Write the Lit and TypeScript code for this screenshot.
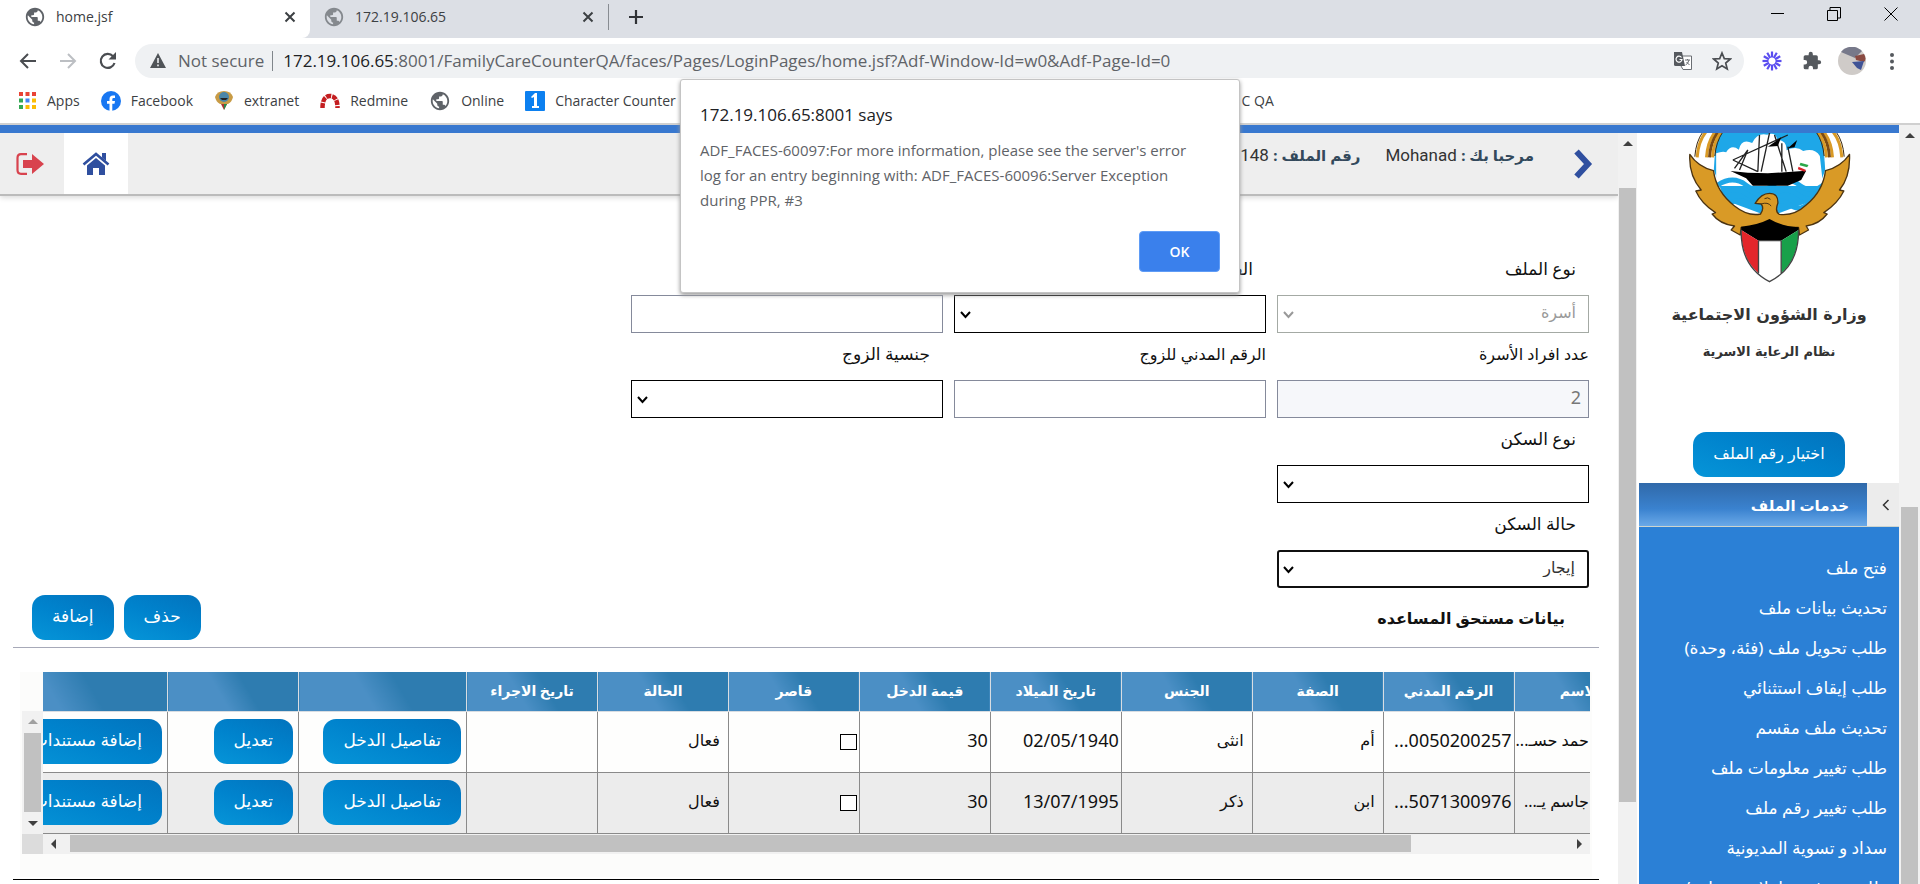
import { LitElement, html, css, svg } from "lit";
import { customElement } from "lit/decorators.js";
import { classMap } from "lit/directives/class-map.js";

const GLOBE =
  "M12 2C6.48 2 2 6.48 2 12s4.48 10 10 10 10-4.48 10-10S17.52 2 12 2zm-1 17.93c-3.95-.49-7-3.85-7-7.93 0-.62.08-1.21.21-1.79L9 15v1c0 1.1.9 2 2 2v1.93zm6.9-2.54c-.26-.81-1-1.39-1.9-1.39h-1v-3c0-.55-.45-1-1-1H8v-2h2c.55 0 1-.45 1-1V7h2c1.1 0 2-.9 2-2v-.41c2.93 1.19 5 4.06 5 7.41 0 2.08-.8 3.97-2.1 5.39z";

const globe = (color: string) =>
  html`<svg width="22" height="22" viewBox="0 0 24 24" aria-hidden="true"><path fill=${color} d=${GLOBE} /></svg>`;

const closeIcon = html`<svg width="12" height="12" viewBox="0 0 12 12" aria-hidden="true">
  <path d="M1.5 1.5 10.5 10.5M10.5 1.5 1.5 10.5" stroke="#3c4043" stroke-width="2" />
</svg>`;

type Dir = "up" | "down" | "left" | "right";
const ARROWS: Record<Dir, string> = {
  up: "M0 7 5 2 10 7Z",
  down: "M0 3 5 8 10 3Z",
  left: "M7 0 2 5 7 10Z",
  right: "M3 0 8 5 3 10Z",
};
const arrow = (dir: Dir, color = "#404040") =>
  html`<svg class="arrow" width="10" height="10" viewBox="0 0 10 10" aria-hidden="true"><path fill=${color} d=${ARROWS[dir]} /></svg>`;

const emblem = html`<svg class="emblem" width="167" height="150" viewBox="255 39 500 450" aria-hidden="true">
  <path fill="#1ea7e8" d="M345 39H665L672 150 640 240 505 290 370 240 338 150Z" />
  <path fill="#fff" d="M345 100q20-8 30-3 15-25 38-8 8-35 40-20 15-32 45-25 25-10 30 15 30 2 28 32 30-15 50 2 35-10 50 15l10 90H345Z" />
  <path fill="none" stroke="#1ea7e8" stroke-width="14" d="M350 195q45-30 85 0t80 0 80 0 75-4M362 222q40-26 78 2t75 0 75 0 65-6M385 250q30-20 60 4t60 0 60 0 60-8" />
  <path fill="#000" d="M388 153 440 158 500 160 615 152 600 180 560 197H455L435 175Z" />
  <path fill="none" stroke="#222" stroke-width="4" d="M395 120 560 45M395 120 470 155M475 45 470 155M505 39 480 155M520 45 555 155M542 70V155M560 80 575 155M415 150 440 90 400 145" />
  <path fill="#000" d="M500 80 540 52 530 78ZM560 85 588 60 580 82Z" />
  <path fill="#2ba84a" d="M598 128 622 135 618 142 595 136Z" />
  <path fill="#d8222a" d="M592 140 615 150 610 155 590 148Z" />
  ${[
    ["#d99a26", 288, 722],
    ["#fff", 302, 708],
    ["#d99a26", 316, 694],
    ["#7a4a14", 325, 685],
    ["#d99a26", 334, 676],
  ].map(
    ([c, l, r]) => svg`<path fill="none" stroke=${c} stroke-width="9" d="M${l} 112Q${Number(l) + 3} 65 ${Number(l) + 26} 36M${r} 112Q${Number(r) - 3} 65 ${Number(r) - 26} 36"/>`,
  )}
  <path fill="none" stroke="#3d2a10" stroke-width="3" d="M281 110Q284 65 305 36M729 110Q726 65 705 36M341 108Q345 65 365 36M669 108Q665 65 645 36" />
  <path
    fill="#d99a26"
    stroke="#4a3312"
    stroke-width="4"
    stroke-linejoin="round"
    d="M266 103Q290 140 337 152Q345 215 400 258Q440 290 478 282Q490 265 480 252L462 250Q480 220 505 220Q532 220 530 250Q520 275 535 283Q580 288 615 255Q665 215 673 152Q720 140 745 103Q748 170 715 210L728 213Q710 250 668 278L678 282Q655 312 615 318L622 330 595 345 592 322H420L417 345 390 330 400 318Q355 312 333 282L343 278Q300 250 284 213L300 210Q262 165 266 103Z"
  />
  <path fill="none" stroke="#4a3312" stroke-width="3" d="M480 252Q500 245 510 258M490 236Q500 230 508 238" />
  <path fill="#000" d="M420 330 420 320 Q470 315 505 297Q545 320 592 322V330L540 362H472Z" />
  <path fill="#e3262b" d="M420 330 472 362V460Q420 415 420 330Z" />
  <path fill="#18a04a" d="M592 330 540 362V460Q592 415 592 330Z" />
  <path fill="#fff" d="M472 362H540V460L505 485 472 460Z" />
  <path fill="none" stroke="#444" stroke-width="4" d="M420 330Q418 440 505 485Q594 440 592 330M472 362V460M540 362V460M472 362H540" />
</svg>`;

interface Field {
  id: string;
  label: string;
  kind: "select" | "input" | "blank";
  value?: string;
  disabled?: boolean;
  focused?: boolean;
  flush?: boolean;
}

const FIELDS: Field[] = [
  { id: "file-type", label: "نوع الملف", kind: "select", value: "أسرة", disabled: true },
  { id: "category", label: "الفئة", kind: "select" },
  { id: "unit", label: "الوحدة", kind: "input" },
  { id: "members", label: "عدد افراد الأسرة", kind: "input", value: "2", disabled: true, flush: true },
  { id: "husband-id", label: "الرقم المدني للزوج", kind: "input", flush: true },
  { id: "nationality", label: "جنسية الزوج", kind: "select" },
  { id: "housing-type", label: "نوع السكن", kind: "select" },
  { id: "b1", label: "", kind: "blank" },
  { id: "b2", label: "", kind: "blank" },
  { id: "housing-state", label: "حالة السكن", kind: "select", value: "إيجار", focused: true },
];

const HEADERS = ["الاسم", "الرقم المدني", "الصفة", "الجنس", "تاريخ الميلاد", "قيمة الدخل", "قاصر", "الحالة", "تاريخ الاجراء", "", "", ""];

const ROWS = [
  { name: "حمد حسـ...", civil: "0050200257...", role: "أم", sex: "انثى", born: "02/05/1940", income: "30", state: "فعال" },
  { name: "جاسم يـ...", civil: "5071300976...", role: "ابن", sex: "ذكر", born: "13/07/1995", income: "30", state: "فعال" },
];

const MENU = [
  "فتح ملف",
  "تحديث بيانات ملف",
  "طلب تحويل ملف (فئة، وحدة)",
  "طلب إيقاف استثنائي",
  "تحديث ملف مقسم",
  "طلب تغيير معلومات ملف",
  "طلب تغيير رقم ملف",
  "سداد و تسوية المديونية",
  "طلب صرف معاملات مختلفة/معونة",
];

@customElement("browser-chrome")
export class BrowserChrome extends LitElement {
  static styles = css`
    :host {
      display: block;
      flex: none;
      font: 15px/20px "Open Sans", "Noto Sans", sans-serif;
      color: #3c4043;
      background: #fff;
      border-bottom: 2px solid #d0d0d0;
    }
    svg {
      display: block;
      flex: none;
    }
    button {
      display: grid;
      place-items: center;
      border: 0;
      padding: 0;
      background: none;
      font: inherit;
      color: inherit;
    }
    .tabs {
      display: flex;
      align-items: center;
      height: 38px;
      background: #dcdfe5;
    }
    .tab {
      display: flex;
      align-items: center;
      gap: 10px;
      width: 310px;
      height: 38px;
      padding: 0 14px 4px 24px;
      box-sizing: border-box;
      font-size: 14px;
    }
    .tab.active {
      background: #fff;
      border-radius: 0 0 8px 0;
    }
    .tab.idle {
      width: 298px;
      padding-left: 13px;
    }
    .tab span {
      flex: 1;
    }
    .plus {
      height: 26px;
      padding: 0 0 0 19px;
      border-left: 1px solid #888c92;
      margin-bottom: 4px;
    }
    .window {
      display: flex;
      gap: 43px;
      margin-left: auto;
      padding: 0 22px 10px 0;
    }
    .bar {
      display: flex;
      align-items: center;
      height: 45px;
      padding: 0 18px;
    }
    .nav {
      display: flex;
      gap: 20px;
    }
    .pill {
      display: flex;
      flex: 1;
      align-items: center;
      height: 34px;
      margin: 0 18px 0 17px;
      padding: 0 12px 0 15px;
      border-radius: 17px;
      background: #eff1f3;
      font-size: 17px;
      color: #5f6368;
      white-space: nowrap;
    }
    .secure {
      margin-left: 12px;
      padding-right: 8px;
      border-right: 1px solid #80868b;
    }
    .pill a {
      flex: 1;
      margin-left: 10px;
      color: #5f6368;
      text-decoration: none;
    }
    .pill b {
      font-weight: 400;
      color: #202124;
    }
    .actions {
      display: flex;
      gap: 20px;
      align-items: center;
    }
    .avatar {
      margin: 0 -4px;
    }
    .marks {
      display: flex;
      align-items: center;
      gap: 21px;
      height: 40px;
      box-sizing: border-box;
      padding: 0 19px 4px;
      font-size: 14px;
    }
    .marks a {
      display: flex;
      align-items: center;
      gap: 10px;
      color: inherit;
      text-decoration: none;
      white-space: nowrap;
    }
    .marks .last {
      justify-content: flex-end;
      width: 577px;
    }
  `;

  render() {
    const dots = ["#e94335", "#e94335", "#e94335", "#34a853", "#4285f4", "#fbbc05", "#34a853", "#fbbc05", "#fbbc05"];
    return html`
      <div class="tabs">
        <div class="tab active">${globe("#5f6368")}<span>home.jsf</span><button aria-label="Close tab">${closeIcon}</button></div>
        <div class="tab idle">${globe("#85898e")}<span>172.19.106.65</span><button aria-label="Close tab">${closeIcon}</button></div>
        <button class="plus" aria-label="New tab">
          <svg width="16" height="16" viewBox="0 0 16 16"><path d="M8 1V15M1 8H15" stroke="#303236" stroke-width="2.2" /></svg>
        </button>
        <div class="window">
          <button aria-label="Minimize"><svg width="13" height="14" viewBox="0 0 13 14"><path d="M0 6.5H13" stroke="#000" /></svg></button>
          <button aria-label="Restore">
            <svg width="14" height="14" viewBox="0 0 14 14"><path d="M.5 3.5H10.5V13.5H.5ZM3 3V.5H13.5V11H11" fill="none" stroke="#000" /></svg>
          </button>
          <button aria-label="Close"><svg width="14" height="14" viewBox="0 0 14 14"><path d="M.5.5 13.5 13.5M13.5.5.5 13.5" stroke="#000" /></svg></button>
        </div>
      </div>
      <div class="bar">
        <div class="nav">
          <button aria-label="Back"><svg width="20" height="20" viewBox="0 0 20 20"><path d="M18 10H3M10 3 3 10 10 17" fill="none" stroke="#4a4d51" stroke-width="2" /></svg></button>
          <button aria-label="Forward"><svg width="20" height="20" viewBox="0 0 20 20"><path d="M2 10H17M10 3 17 10 10 17" fill="none" stroke="#bcbfc3" stroke-width="2" /></svg></button>
          <button aria-label="Reload">
            <svg width="20" height="20" viewBox="0 0 20 20"><path d="M16.5 12A7 7 0 1 1 15 5.200" fill="none" stroke="#4a4d51" stroke-width="2.200" /><path d="M18 1V8.500H10.500Z" fill="#4a4d51" /></svg>
          </button>
        </div>
        <div class="pill">
          <svg width="16" height="15" viewBox="0 0 16 15"><path d="M8 0 16 15H0Z" fill="#505458" /><path d="M8 5V10M8 11.500V13.300" stroke="#eff1f3" stroke-width="1.600" /></svg>
          <span class="secure">Not secure</span>
          <a href="#"><b>172.19.106.65</b>:8001/FamilyCareCounterQA/faces/Pages/LoginPages/home.jsf?Adf-Window-Id=w0&amp;Adf-Page-Id=0</a>
          <div class="actions">
            <svg width="18" height="18" viewBox="0 0 18 18">
              <path d="M7 4H17.500V17.500H9L7 14" fill="#fff" stroke="#6a6e73" /><path d="M0 0H8L11 14H1.500Q0 14 0 12.500Z" fill="#55595e" />
              <path d="M7.500 5.500A3 3 0 1 0 8 7.500H5.500" fill="none" stroke="#fff" stroke-width="1.200" /><path d="M11 8H16M13.500 7V8M15 8Q14 12 11.500 13M12.500 10 15.500 13" fill="none" stroke="#6a6e73" />
            </svg>
            <svg width="20" height="20" viewBox="0 0 20 20"><path d="M10 2 12.300 7.600 18.300 8 13.700 12 15.200 17.900 10 14.700 4.800 17.900 6.300 12 1.700 8 7.700 7.600Z" fill="none" stroke="#4a4d51" stroke-width="1.700" /></svg>
          </div>
        </div>
        <div class="actions">
          <svg width="20" height="20" viewBox="0 0 20 20">
            ${[0, 30, 60, 90, 120, 150, 180, 210, 240, 270, 300, 330].map((a) => svg`<path d="M10 .5V6.500" stroke="#5a4df0" stroke-width="2.200" transform="rotate(${a} 10 10)"/>`)}
          </svg>
          <svg width="20" height="20" viewBox="0 0 24 24"><path fill="#55595e" d="M20.500 11H19V7a2 2 0 0 0-2-2h-4V3.500a2.500 2.500 0 0 0-5 0V5H4a2 2 0 0 0-2 2v3.800h1.500a2.700 2.700 0 0 1 0 5.400H2V20a2 2 0 0 0 2 2h3.800v-1.500a2.700 2.700 0 0 1 5.400 0V22H17a2 2 0 0 0 2-2v-4h1.500a2.500 2.500 0 0 0 0-5z" /></svg>
          <svg class="avatar" width="28" height="28" viewBox="0 0 28 28">
            <circle cx="14" cy="14" r="14" fill="#cfcbc8" /><path d="M3 5A14 14 0 0 1 24 4L17 11Z" fill="#77798a" /><path d="M17 9 26 7Q29 12 26 15L18 13Z" fill="#8a4a42" /><path d="M14 15 26 14 23 23 19 21Z" fill="#3f5396" />
          </svg>
          <svg width="20" height="20" viewBox="0 0 20 20"><circle cx="10" cy="4" r="2" fill="#55595e" /><circle cx="10" cy="10.500" r="2" fill="#55595e" /><circle cx="10" cy="17" r="2" fill="#55595e" /></svg>
        </div>
      </div>
      <div class="marks">
        <a href="#"><svg width="18" height="18" viewBox="0 0 18 18">${dots.map((c, i) => svg`<rect x=${(i % 3) * 6.5} y=${Math.floor(i / 3) * 6.5} width="4" height="4" fill=${c}/>`)}</svg>Apps</a>
        <a href="#"><svg width="20" height="20" viewBox="0 0 20 20"><circle cx="10" cy="10" r="10" fill="#1877f2" /><path d="M8.500 20V12.800H6V10H8.500V8Q8.500 4.500 12 4.500H14V7H12.500Q11.300 7 11.300 8.300V10H14L13.500 12.800H11.300V20Z" fill="#fff" /></svg>Facebook</a>
        <a href="#"><svg width="20" height="20" viewBox="0 0 20 20"><path d="M1 6Q3 0 10 0T19 6Q18 11 14 13H6Q2 11 1 6Z" fill="#c89b45" /><circle cx="10" cy="6" r="5" fill="#4a86a8" /><path d="M6 7H14L12 9H8Z" fill="#222" /><path d="M7 13H13L10 19Z" fill="#a33" /><path d="M10 13H13L10 19Z" fill="#2a8a4a" /></svg>extranet</a>
        <a href="#"><svg width="20" height="20" viewBox="0 0 20 20"><path d="M2.500 17Q2.500 5 10 5T17.500 17" fill="none" stroke="#c41e20" stroke-width="4.500" stroke-dasharray="5 1" /></svg>Redmine</a>
        <a href="#">${globe("#5f6368")}Online</a>
        <a href="#"><svg width="20" height="20" viewBox="0 0 20 20"><rect width="20" height="20" rx="1" fill="#0c80f0" /><path d="M6 6 10 2H12V15H14V17H7V15H9V6L7 7Z" fill="#fff" /></svg>Character Counter</a>
        <a class="last" href="#">C QA</a>
      </div>
    `;
  }
}

@customElement("app-root")
export class AppRoot extends LitElement {
  static styles = css`
    :host {
      display: flex;
      flex-direction: column;
      position: relative;
      height: 100vh;
      overflow: hidden;
      background: #fff;
      color: #111;
      font: 17px/24px "Noto Sans", "DejaVu Sans", sans-serif;
    }
    svg {
      display: block;
      flex: none;
    }
    button {
      font: inherit;
      cursor: pointer;
    }
    .page {
      display: flex;
      flex: 1;
      min-height: 0;
    }
    .site {
      display: flex;
      flex: 1;
      flex-wrap: nowrap;
      min-width: 0;
      border-top: 8px solid #3878cf;
    }
    .main {
      flex: 1;
      min-width: 0;
      overflow: hidden;
    }
    .track {
      display: flex;
      flex: none;
      flex-direction: column;
      align-items: center;
      width: 21px;
      background: #f1f1f1;
    }
    .track.inner {
      width: 19px;
    }
    .track .arrow {
      margin: 6px 0;
    }
    .track.outer .thumb {
      width: 17px;
      margin-top: 360px;
      flex: 1;
      background: #c1c1c1;
    }
    .track.inner .thumb {
      width: 17px;
      height: 614px;
      margin-top: 33px;
      background: #c1c1c1;
    }
    .top {
      display: flex;
      align-items: stretch;
      height: 61px;
      background: #eeeeee;
      border-bottom: 2px solid #bbb;
      box-shadow: 0 2px 5px #ddd;
    }
    .top .next {
      display: grid;
      place-items: center;
      width: 84px;
      padding: 0 0 0 14px;
      border: 0;
      background: none;
    }
    .who {
      display: flex;
      gap: 25px;
      flex: 1;
      padding-top: 10px;
    }
    .who b {
      color: #33495c;
      font-size: 15px;
    }
    .who span span {
      font: 17px/24px Roboto, sans-serif;
      color: #333;
    }
    .top .icon {
      display: grid;
      place-items: center;
      width: 64px;
      padding: 0;
      border: 0;
      background: none;
    }
    .top .icon.exit {
      padding-right: 4px;
    }
    .top .icon.home {
      background: #fff;
    }
    .form {
      display: grid;
      grid-template-columns: repeat(3, minmax(0, 312px));
      gap: 9px 11px;
      padding: 61px 29px 0;
    }
    .field {
      display: flex;
      flex-direction: column;
      gap: 14px;
    }
    label {
      padding: 0 13px;
      font-size: 17px;
      white-space: nowrap;
    }
    label.flush {
      padding: 0;
      font-size: 16px;
    }
    .box {
      display: grid;
      align-items: center;
    }
    .box > * {
      grid-area: 1 / 1;
    }
    .box svg {
      justify-self: end;
      margin: 2px 6px 0;
      pointer-events: none;
    }
    select,
    .text {
      appearance: none;
      box-sizing: border-box;
      width: 100%;
      height: 38px;
      margin: 0;
      padding: 0 12px 4px;
      border: 1px solid #000;
      border-radius: 0;
      outline: none;
      background: #fff;
      color: #333;
      font: 16px/20px "Noto Sans", "DejaVu Sans", sans-serif;
      opacity: 1;
    }
    select:disabled {
      border-color: #a4aaa4;
      color: #9a9a9a;
    }
    .text {
      padding: 0 7px 4px;
      border-color: #858a9b;
    }
    .text:disabled {
      background: #f6f7fa;
      color: #777;
      font-size: 18px;
    }
    .focused select {
      border: 2px solid #101010;
      border-radius: 3px;
    }
    .section {
      display: flex;
      align-items: center;
      gap: 10px;
      margin: 0 19px 0 13px;
      padding: 7px 34px 7px 19px;
      border-bottom: 1px solid #a7a9b8;
    }
    h2 {
      flex: 1;
      margin: 0;
      font-size: 16px;
      line-height: 24px;
    }
    .pillbtn {
      flex: none;
      height: 45px;
      padding: 0 20px 4px;
      border: 0;
      border-radius: 13px;
      background: linear-gradient(200deg, #0273bd, #0083cd 50%, #0695d8);
      color: #fff;
      font-size: 17px;
      line-height: 20px;
      white-space: nowrap;
    }
    .panel {
      margin: 24px 26px 0 20px;
      padding: 0 2px 23px;
      background: #fcfcfb;
    }
    .rows {
      display: flex;
    }
    .clip {
      flex: 1;
      min-width: 0;
      overflow: hidden;
    }
    table {
      width: 1671px;
      margin-inline-start: -55px;
      table-layout: fixed;
      border-collapse: collapse;
    }
    .wide {
      width: 168px;
    }
    .widest {
      width: 193px;
    }
    th {
      box-sizing: border-box;
      height: 39px;
      padding: 0;
      border-left: 1px solid #d8dde2;
      border-bottom: 1px solid #d8dde2;
      background: linear-gradient(240deg, #2e7cb0 40%, #4b8fc5 60%, #4b8fc5);
      color: #fff;
      font-size: 14px;
      line-height: 20px;
    }
    td {
      box-sizing: border-box;
      height: 61px;
      padding: 0 8px 3px 0;
      border-left: 1px solid #8a8a8a;
      border-bottom: 1px solid #8a8a8a;
      background: #fefefd;
      font-size: 16px;
      white-space: nowrap;
    }
    tr:nth-child(even) td {
      background: #ececec;
    }
    td.num {
      padding: 0 2px 3px 0;
      font: 18px/24px "Noto Sans", sans-serif;
    }
    td.name {
      padding-right: 56px;
    }
    td.tight {
      padding: 0 5px 0 0;
    }
    td input {
      appearance: none;
      display: block;
      width: 17px;
      height: 16px;
      margin: 3px 0 0;
      border: 1px solid #000;
      background: #fff;
    }
    .vbar {
      display: flex;
      flex-direction: column;
      align-items: center;
      width: 21px;
      padding-top: 39px;
    }
    .vbar div {
      display: flex;
      flex: 1;
      flex-direction: column;
      align-items: center;
      width: 100%;
      background: #f1f1f1;
    }
    .vbar i {
      flex: 1;
      width: 17px;
      background: #c1c1c1;
    }
    .vbar .arrow {
      margin: 6px 0;
    }
    .hbar {
      display: flex;
      align-items: center;
      height: 20px;
      background: #f1f1f1;
    }
    .hbar .arrow {
      margin: 0 6px;
    }
    .hbar i {
      flex: 1;
      height: 17px;
      margin-right: 157px;
      margin-left: 5px;
      background: #c1c1c1;
    }
    .hbar b {
      width: 21px;
      height: 20px;
      background: #dcdcdc;
    }
    .end {
      margin: 2px 19px 0 13px;
      border: 0;
      border-top: 1px solid #000;
    }
    .side {
      display: flex;
      flex: none;
      flex-direction: column;
      align-items: center;
      width: 260px;
      margin-left: 2px;
      overflow: hidden;
    }
    .side .ministry {
      margin: 16px 0 0;
      font: bold 16px/32px "DejaVu Sans", sans-serif;
      color: #333;
    }
    .side .system {
      margin: 5px 0 64px;
      font: bold 13px/32px "DejaVu Sans", sans-serif;
      color: #333;
    }
    .side .pillbtn {
      font-size: 16px;
    }
    .group {
      display: flex;
      flex: none;
      align-items: stretch;
      width: 100%;
      height: 43px;
      margin-top: 6px;
      border-bottom: 1px solid #cdd5cf;
    }
    .group button {
      display: grid;
      place-items: center;
      width: 32px;
      border: 0;
      padding: 0 0 0 6px;
      background: #ececec;
    }
    .group h3 {
      flex: 1;
      margin: 0;
      padding: 10px 18px 0;
      background: linear-gradient(#3069a9, #3a82cf 60%, #6aa9e8);
      color: #fff;
      font-size: 15px;
      line-height: 24px;
    }
    nav {
      display: flex;
      flex: 1;
      flex-direction: column;
      gap: 16px;
      width: 100%;
      box-sizing: border-box;
      padding: 29px 12px 0;
      background: #2b80d6;
    }
    nav a {
      color: #fff;
      font-size: 17px;
      line-height: 24px;
      text-decoration: none;
      white-space: nowrap;
    }
    .dialog {
      position: absolute;
      top: 79px;
      left: 50%;
      box-sizing: border-box;
      width: 560px;
      margin-left: -280px;
      padding: 22px 19px 20px;
      border: 1px solid #c4c4c4;
      border-radius: 3px;
      background: #fff;
      box-shadow: 0 2px 4px #999;
      font: 15px/25px "Open Sans", "Noto Sans", sans-serif;
      color: #5f6368;
    }
    .dialog h1 {
      margin: 0 0 11px;
      font-size: 17px;
      line-height: 25px;
      font-weight: 400;
      color: #202124;
    }
    .dialog p {
      margin: 0 24px 18px 0;
    }
    .dialog button {
      display: block;
      width: 81px;
      height: 41px;
      margin-left: auto;
      border: 1px solid #5f9cf6;
      border-radius: 4px;
      background: #3a80ec;
      color: #fff;
      font-size: 14px;
      font-weight: 600;
    }
  `;

  private field(f: Field) {
    if (f.kind === "blank") return html`<div></div>`;
    return html`<div class=${classMap({ field: true, focused: !!f.focused })}>
      <label class=${classMap({ flush: !!f.flush })} for=${f.id}>${f.label}</label>
      ${f.kind === "input"
        ? html`<input class="text" id=${f.id} type="text" .value=${f.value ?? ""} ?disabled=${f.disabled} />`
        : html`<div class="box">
            <select id=${f.id} ?disabled=${f.disabled}>
              <option>${f.value ?? ""}</option>
            </select>
            <svg width="11" height="8" viewBox="0 0 11 8" aria-hidden="true"><path d="M1 1 5.500 6 10 1" fill="none" stroke=${f.disabled ? "#999" : "#000"} stroke-width="2" /></svg>
          </div>`}
    </div>`;
  }

  private row(r: (typeof ROWS)[number]) {
    return html`<tr>
      <td class="name">${r.name}</td>
      <td class="num">${r.civil}</td>
      <td>${r.role}</td>
      <td>${r.sex}</td>
      <td class="num">${r.born}</td>
      <td class="num">${r.income}</td>
      <td class="num"><input type="checkbox" aria-label="قاصر" /></td>
      <td>${r.state}</td>
      <td></td>
      <td class="tight"><button class="pillbtn">تفاصيل الدخل</button></td>
      <td class="tight"><button class="pillbtn">تعديل</button></td>
      <td class="tight"><button class="pillbtn">إضافة مستندات</button></td>
    </tr>`;
  }

  render() {
    return html`
      <browser-chrome></browser-chrome>
      <div class="page">
        <div class="site">
          <main class="main" dir="rtl">
            <header class="top">
              <button class="next" aria-label="التالي">
                <svg width="20" height="30" viewBox="0 0 20 30"><path d="M3.500 2.500 15 15 3.500 27.500" fill="none" stroke="#2f4f9f" stroke-width="6" /></svg>
              </button>
              <div class="who">
                <span><b>مرحبا بك :</b> <span>Mohanad</span></span>
                <span><b>رقم الملف :</b> <span>148</span></span>
              </div>
              <button class="icon home" aria-label="الرئيسية">
                <svg width="28" height="24" viewBox="0 0 28 24"><path d="M1.500 12.500 14 2 26.500 12.500" fill="none" stroke="#2f4f9f" stroke-width="2.600" /><path d="M20 1H24V9L20 5.500ZM5 13.500 14 6 23 13.500V23H17V16H11V23H5Z" fill="#2f4f9f" /></svg>
              </button>
              <button class="icon exit" aria-label="خروج">
                <svg width="28" height="22" viewBox="0 0 28 22"><path d="M11 1.200H5Q1.500 1.200 1.500 5V17Q1.500 20.800 5 20.800H11" fill="none" stroke="#d8434e" stroke-width="2.200" /><path d="M7 7H16V1L28 11 16 21V15H7Z" fill="#d8434e" /></svg>
              </button>
            </header>
            <form class="form">${FIELDS.map((f) => this.field(f))}</form>
            <div class="section">
              <h2>بيانات مستحق المساعده</h2>
              <button class="pillbtn">حذف</button>
              <button class="pillbtn">إضافة</button>
            </div>
            <section class="panel">
              <div class="rows">
                <div class="clip">
                  <table>
                    <colgroup>
                      ${HEADERS.map((_, i) => html`<col class=${i === 9 ? "wide" : i === 11 ? "widest" : ""} />`)}
                    </colgroup>
                    <thead>
                      <tr>${HEADERS.map((h) => html`<th scope="col">${h}</th>`)}</tr>
                    </thead>
                    <tbody>${ROWS.map((r) => this.row(r))}</tbody>
                  </table>
                </div>
                <div class="vbar"><div>${arrow("up", "#a0a0a0")}<i></i>${arrow("down")}</div></div>
              </div>
              <div class="hbar">${arrow("right")}<i></i>${arrow("left")}<b></b></div>
            </section>
            <hr class="end" />
          </main>
          <div class="track inner">${arrow("up")}<div class="thumb"></div></div>
          <aside class="side" dir="rtl">
            ${emblem}
            <p class="ministry">وزارة الشؤون الاجتماعية</p>
            <p class="system">نظام الرعاية الاسرية</p>
            <button class="pillbtn">اختيار رقم الملف</button>
            <div class="group">
              <button aria-label="طي">
                <svg width="8" height="12" viewBox="0 0 8 12"><path d="M6.500 1 1.500 6 6.500 11" fill="none" stroke="#333" stroke-width="1.500" /></svg>
              </button>
              <h3>خدمات الملف</h3>
            </div>
            <nav>${MENU.map((m) => html`<a href="#">${m}</a>`)}</nav>
          </aside>
        </div>
        <div class="track outer">${arrow("up")}<div class="thumb"></div></div>
      </div>
      <div class="dialog" role="alertdialog" aria-labelledby="dlg-title">
        <h1 id="dlg-title">172.19.106.65:8001 says</h1>
        <p>ADF_FACES-60097:For more information, please see the server's error log for an entry beginning with: ADF_FACES-60096:Server Exception during PPR, #3</p>
        <button>OK</button>
      </div>
    `;
  }
}
